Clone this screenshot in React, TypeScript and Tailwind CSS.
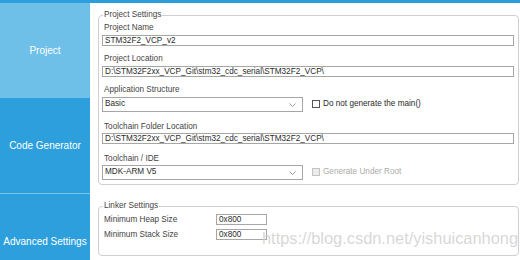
import React from 'react'

const font = { fontFamily: '"Liberation Sans", Arial, sans-serif' }

function Chevron() {
  return (
    <svg className="h-[4px] w-[7px]" viewBox="0 0 7 4" fill="none" stroke="#8a8a8a" strokeWidth={0.9}>
      <path d="M0.5 0.5 L3.5 3.5 L6.5 0.5" />
    </svg>
  )
}

function TextBox({ value, className = '' }: { value: string; className?: string }) {
  return (
    <div className={`flex h-[11px] items-center border border-[#a6a6a6] bg-white pl-[2px] leading-[9px] text-[#2a2a2a] ${className}`}>
      {value}
    </div>
  )
}

function Select({ value }: { value: string }) {
  return (
    <div className="flex h-[15px] w-[201px] items-center justify-between border border-[#a6a6a6] bg-white pl-[2px] pr-[6px] text-[#2a2a2a]">
      <span>{value}</span>
      <Chevron />
    </div>
  )
}

function Check({ label, disabled }: { label: string; disabled?: boolean }) {
  return (
    <div className={`ml-[9px] flex items-center gap-[3px] ${disabled ? 'text-[#ababab]' : 'text-[#2a2a2a]'}`}>
      <span
        className={`h-[8px] w-[8px] border ${disabled ? 'border-[#c4c4c4] bg-[#ececec]' : 'border-[#555] bg-white'}`}
      />
      <span>{label}</span>
    </div>
  )
}

function Label({ children, className = '' }: { children: React.ReactNode; className?: string }) {
  return <div className={`pl-[2px] leading-[10px] text-[#444] ${className}`}>{children}</div>
}

export default function App() {
  const tabs = [
    { name: 'Project', active: true },
    { name: 'Code Generator', active: false },
    { name: 'Advanced Settings', active: false },
  ]

  return (
    <div className="relative h-[260px] w-[520px] overflow-hidden border-t-[3px] border-[#2b9fdb] bg-white" style={font}>
      <div className="flex h-full">
        {/* Sidebar tabs */}
        <div className="flex w-[90px] shrink-0 flex-col bg-[#2c9fdc]">
          {tabs.map((t, i) => (
            <div
              key={t.name}
              className={`flex h-[95px] shrink-0 items-center justify-center text-[10px] text-white ${
                t.active ? 'bg-[#6fc0e9]' : 'bg-[#2c9fdc]'
              } ${i === 2 ? 'border-t border-[#7cc6ec]' : ''}`}
            >
              {t.name}
            </div>
          ))}
        </div>

        {/* Settings */}
        <div className="flex-1 pl-[8px] pr-[1px] pt-[7px] text-[8.2px]">
          <fieldset className="rounded-[4px] border border-[#cfcfcf] pb-[4px] pl-[3px] pr-[4px]">
            <legend className="ml-[1px] px-[1px] leading-[10px] text-[#444]">Project Settings</legend>

            <Label className="mt-[3px]">Project Name</Label>
            <TextBox value="STM32F2_VCP_v2" className="mt-[2px]" />

            <Label className="mt-[8px]">Project Location</Label>
            <TextBox value="D:\STM32F2xx_VCP_Git\stm32_cdc_serial\STM32F2_VCP\" className="mt-[2px]" />

            <Label className="mt-[8px]">Application Structure</Label>
            <div className="mt-[2px] flex items-center">
              <Select value="Basic" />
              <Check label="Do not generate the main()" />
            </div>

            <Label className="mt-[10px]">Toolchain Folder Location</Label>
            <TextBox value="D:\STM32F2xx_VCP_Git\stm32_cdc_serial\STM32F2_VCP\" className="mt-[1px]" />

            <Label className="mt-[10px]">Toolchain / IDE</Label>
            <div className="mt-[1px] flex items-center">
              <Select value="MDK-ARM V5" />
              <Check label="Generate Under Root" disabled />
            </div>
          </fieldset>

          <fieldset className="mt-[16px] h-[55px] rounded-[4px] border border-[#cfcfcf] pl-[3px] pr-[4px]">
            <legend className="ml-[1px] px-[1px] leading-[10px] text-[#444]">Linker Settings</legend>
            <div className="mt-[3px] flex items-center">
              <Label className="w-[114px]">Minimum Heap Size</Label>
              <TextBox value="0x800" className="w-[51px]" />
            </div>
            <div className="mt-[4px] flex items-center">
              <Label className="w-[114px]">Minimum Stack Size</Label>
              <TextBox value="0x800" className="w-[51px]" />
            </div>
          </fieldset>
        </div>
      </div>

      {/* watermark */}
      <div className="pointer-events-none absolute left-[262px] top-[225px] text-[16.4px] leading-[20px] text-[#d0d0d0]/85">
        https://blog.csdn.net/yishuicanhong
      </div>
    </div>
  )
}
